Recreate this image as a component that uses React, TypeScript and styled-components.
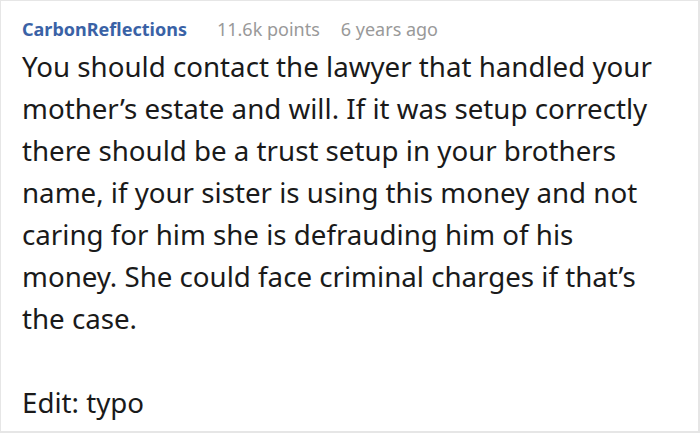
import styled, { createGlobalStyle } from "styled-components";

const GlobalStyle = createGlobalStyle`
    html, body {
        margin: 0;
        padding: 0;
        background: #ffffff;
    }
`;

export default function App() {
    return (
        <>
            <GlobalStyle />
            <CommentCardStyled>
                <CommentHeaderStyled>
                    <AuthorStyled>CarbonReflections</AuthorStyled>
                    <MetaStyled>11.6k points</MetaStyled>
                    <MetaStyled>6 years ago</MetaStyled>
                </CommentHeaderStyled>
                <CommentBodyStyled>
                    <p>
                        You should contact the lawyer that handled your mother’s
                        estate and will. If it was setup correctly there should be a
                        trust setup in your brothers name, if your sister is using this
                        money and not caring for him she is defrauding him of his
                        money. She could face criminal charges if that’s the case.
                    </p>
                    <p>Edit: typo</p>
                </CommentBodyStyled>
            </CommentCardStyled>
        </>
    );
}

const CommentCardStyled = styled.div`
    box-sizing: border-box;
    width: 700px;
    height: 433px;
    border: 1px solid #e6e6e6;
    border-right-width: 2px;
    border-bottom-width: 2px;
    padding: 16px 30px 0 21px;
    font-family: "Noto Sans", "Open Sans", sans-serif;
    background: #ffffff;
    overflow: hidden;
`;

const CommentHeaderStyled = styled.div`
    display: flex;
    align-items: baseline;
    gap: 21px;
    font-size: 18px;
    line-height: 24px;
    margin-bottom: 4px;
`;

const AuthorStyled = styled.span`
    color: #3a62a6;
    font-weight: 700;
    margin-right: 9px;
`;

const MetaStyled = styled.span`
    color: #999999;
`;

const CommentBodyStyled = styled.div`
    color: #1a1a1a;
    font-size: 27.7px;
    line-height: 42px;

    p {
        margin: 0 0 42px;
    }
`;
